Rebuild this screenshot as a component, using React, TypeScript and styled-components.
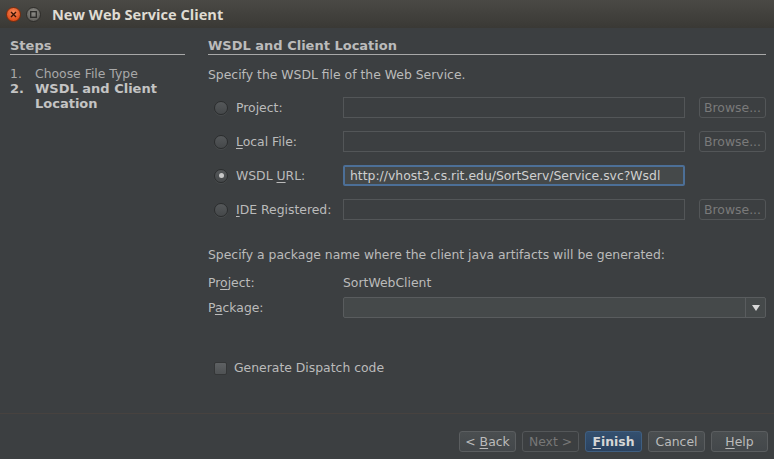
import React from 'react'
import styled, { createGlobalStyle, css } from 'styled-components';

const GlobalStyle = createGlobalStyle`
    html, body {
        margin: 0;
        padding: 0;
        background: #3c3f41;
    }
    * {
        box-sizing: border-box;
    }
`;

const Window = styled.div`
    width: 774px;
    height: 459px;
    display: flex;
    flex-direction: column;
    background: #3c3f41;
    color: #bbbbbb;
    font-family: "DejaVu Sans", "Liberation Sans", sans-serif;
    font-size: 12.4px;
    overflow: hidden;
`;

const TitleBar = styled.div`
    height: 28px;
    flex: none;
    display: flex;
    align-items: center;
    padding-left: 6px;
    background: linear-gradient(#4a4945, #3a3935);
`;

const WinButton = styled.div<{ kind: "close" | "max" }>`
    width: 15px;
    height: 15px;
    border-radius: 50%;
    margin-right: 5px;
    display: flex;
    align-items: center;
    justify-content: center;
    ${(p) => (p.kind == "close" ? css`
        background: radial-gradient(circle at 50% 35%, #f68a5c, #e0501d 70%, #b8400f);
        border: 1px solid #7c2c0c;
    ` : css`
        background: radial-gradient(circle at 50% 35%, #8e8d88, #64635f 70%, #4c4b47);
        border: 1px solid #2f2e2b;
    `)}
`;

const Title = styled.div`
    margin-left: 6px;
    font-family: "Open Sans", "DejaVu Sans", sans-serif;
    font-weight: bold;
    font-size: 14.6px;
    color: #dfdbd2;
`;

const Body = styled.div`
    flex: 1;
    display: flex;
    padding-top: 10px;
`;

const Sidebar = styled.div`
    width: 185px;
    padding-left: 10px;
    flex: none;
`;

const Main = styled.div`
    flex: 1;
    margin-left: 23px;
    margin-right: 8px;
`;

const Heading = styled.div`
    font-weight: bold;
    font-size: 13px;
    line-height: 16px;
    border-bottom: 1px solid #a8a8a8;
    color: #bbbbbb;
`;

const StepList = styled.div`
    margin-top: 11px;
    display: grid;
    grid-template-columns: 25px 1fr;
    line-height: 15px;
`;

const Step = styled.div<{ current?: boolean }>`
    font-weight: ${p => p.current ? "bold" : "normal"};
    font-size: ${p => p.current ? "13px" : "12.4px"};
    color: ${p => p.current ? "#c4c4c4" : "#a9a9a9"};
`;

const Text = styled.div<{ top: number }>`
    margin-top: ${p => p.top}px;
    line-height: 16px;
`;

const FormGrid = styled.div<{ top: number }>`
    margin-top: ${p => p.top}px;
    display: grid;
    grid-template-columns: 121px 1fr 67px;
    column-gap: 14px;
    row-gap: 13px;
`;

const RadioLabel = styled.label`
    display: flex;
    align-items: center;
    height: 21px;
    padding-left: 6px;
    gap: 8px;
    white-space: nowrap;
`;

const Radio = styled.span<{ checked?: boolean }>`
    flex: none;
    width: 14px;
    height: 14px;
    border-radius: 50%;
    background: linear-gradient(#55585a, #45484a);
    border: 1px solid #2b2d2e;
    box-shadow: 0 1px 0 rgba(255, 255, 255, 0.06);
    display: flex;
    align-items: center;
    justify-content: center;

    &::after {
        content: "";
        width: 5px;
        height: 5px;
        border-radius: 50%;
        background: ${p => p.checked ? "#c8c8c8" : "transparent"};
    }
`;

const Mn = styled.u`
    text-decoration: underline;
    text-underline-offset: 2px;
`;

const Field = styled.div<{ active?: boolean }>`
    height: 21px;
    border: 1px solid #535658;
    background: #3c3f41;
    display: flex;
    align-items: center;
    padding-left: 6px;
    white-space: nowrap;
    ${(p) => (p.active && css`
        border: 2px solid #4c6f97;
        border-radius: 2px;
        background: #45494a;
        color: #d0d0d0;
        padding-left: 5px;
    `)}
`;

const Browse = styled.div`
    height: 21px;
    border: 1px solid #535658;
    border-radius: 3px;
    color: #7a7a7a;
    display: flex;
    align-items: center;
    justify-content: center;
`;

const InfoGrid = styled.div<{ top: number }>`
    margin-top: ${p => p.top}px;
    display: grid;
    grid-template-columns: 135px 1fr;
    row-gap: 7px;
    align-items: center;
`;

const Combo = styled.div`
    height: 21px;
    border: 1px solid #595c5e;
    border-radius: 2px;
    background: #45494a;
    display: flex;
    justify-content: flex-end;
`;

const ComboArrow = styled.div`
    width: 20px;
    border-left: 1px solid #595c5e;
    display: flex;
    align-items: center;
    justify-content: center;

    &::after {
        content: "";
        width: 0;
        height: 0;
        border-left: 4px solid transparent;
        border-right: 4px solid transparent;
        border-top: 6px solid #d8d8d8;
    }
`;

const CheckRow = styled.label<{ top: number }>`
    margin-top: ${p => p.top}px;
    padding-left: 6px;
    display: flex;
    align-items: center;
    gap: 7px;
    line-height: 16px;
`;

const Checkbox = styled.span`
    width: 13px;
    height: 13px;
    border-radius: 2px;
    background: linear-gradient(#5e6163, #4f5254);
    border: 1px solid #343637;
`;

const Footer = styled.div`
    height: 46px;
    flex: none;
    border-top: 1px solid #47423f;
    display: flex;
    justify-content: flex-end;
    gap: 6px;
    padding: 17px 6px 7px 0;
`;

const Button = styled.div<{ variant?: "default" | "disabled" | "primary" }>`
    width: 57px;
    height: 21px;
    border-radius: 3px;
    display: flex;
    align-items: center;
    justify-content: center;
    white-space: pre;
    border: 1px solid #5b5e60;
    background: linear-gradient(#4a4e50, #43474a);
    color: #bbbbbb;

    ${(p) => (p.variant == "disabled" && css`
        background: #3c3f41;
        border-color: #545759;
        color: #777777;
    `)}
    ${(p) => (p.variant == "primary" && css`
        background: linear-gradient(#34506f, #2a4260);
        border-color: #3f5f82;
        color: #d6d6d6;
        font-weight: bold;
    `)}
`;

export default function App() {
    return (
        <>
            <GlobalStyle />
            <Window>
                <TitleBar>
                    <WinButton kind="close">
                        <svg width="7" height="7" viewBox="0 0 7 7">
                            <path d="M1 1 L6 6 M6 1 L1 6" stroke="#3a1406" strokeWidth="1.4" />
                        </svg>
                    </WinButton>
                    <WinButton kind="max">
                        <svg width="7" height="7" viewBox="0 0 7 7">
                            <rect x="0.7" y="0.7" width="5.6" height="5.6" fill="none" stroke="#2a2a28" strokeWidth="1.3" />
                        </svg>
                    </WinButton>
                    <Title>New Web Service Client</Title>
                </TitleBar>

                <Body>
                    <Sidebar>
                        <Heading>Steps</Heading>
                        <StepList>
                            <Step>1.</Step>
                            <Step>Choose File Type</Step>
                            <Step current>2.</Step>
                            <Step current>WSDL and Client Location</Step>
                        </StepList>
                    </Sidebar>

                    <Main>
                        <Heading>WSDL and Client Location</Heading>
                        <Text top={12}>Specify the WSDL file of the Web Service.</Text>

                        <FormGrid top={14}>
                            <RadioLabel><Radio /><span>Project:</span></RadioLabel>
                            <Field />
                            <Browse>Browse...</Browse>

                            <RadioLabel><Radio /><span><Mn>L</Mn>ocal File:</span></RadioLabel>
                            <Field />
                            <Browse>Browse...</Browse>

                            <RadioLabel><Radio checked /><span>WSDL <Mn>U</Mn>RL:</span></RadioLabel>
                            <Field active>http://vhost3.cs.rit.edu/SortServ/Service.svc?Wsdl</Field>
                            <div />

                            <RadioLabel><Radio /><span><Mn>I</Mn>DE Registered:</span></RadioLabel>
                            <Field />
                            <Browse>Browse...</Browse>
                        </FormGrid>

                        <Text top={27}>Specify a package name where the client java artifacts will be generated:</Text>

                        <InfoGrid top={12}>
                            <span>Pr<Mn>o</Mn>ject:</span>
                            <span>SortWebClient</span>
                            <span>P<Mn>a</Mn>ckage:</span>
                            <Combo><ComboArrow /></Combo>
                        </InfoGrid>

                        <CheckRow top={42}><Checkbox /><span>Generate Dispatch code</span></CheckRow>
                    </Main>
                </Body>

                <Footer>
                    <Button><span>&lt; <Mn>B</Mn>ack</span></Button>
                    <Button variant="disabled"><span>Next &gt;</span></Button>
                    <Button variant="primary"><span><Mn>F</Mn>inish</span></Button>
                    <Button><span>Cancel</span></Button>
                    <Button><span><Mn>H</Mn>elp</span></Button>
                </Footer>
            </Window>
        </>
    )
}
